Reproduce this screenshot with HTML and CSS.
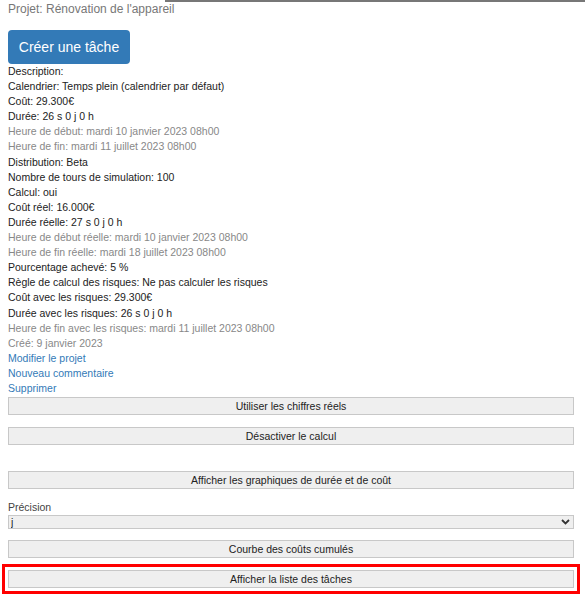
FILE: index.html
```html
<!DOCTYPE html>
<html lang="fr">
<head>
  <meta charset="UTF-8">
  <title>Projet</title>
  <link rel="stylesheet" href="styles.css">
</head>
<body>
  <div class="topbar">
    <div class="project-title">Projet: Rénovation de l'appareil</div>
    <div class="top-line"></div>
  </div>
  <div class="page">
    <a href="#" class="btn-primary">Créer une tâche</a>
    <div class="details">
      <div>Description:</div>
      <div>Calendrier: Temps plein (calendrier par défaut)</div>
      <div>Coût: 29.300€</div>
      <div>Durée: 26 s 0 j 0 h</div>
      <div class="muted">Heure de début: mardi 10 janvier 2023 08h00</div>
      <div class="muted">Heure de fin: mardi 11 juillet 2023 08h00</div>
      <div>Distribution: Beta</div>
      <div>Nombre de tours de simulation: 100</div>
      <div>Calcul: oui</div>
      <div>Coût réel: 16.000€</div>
      <div>Durée réelle: 27 s 0 j 0 h</div>
      <div class="muted">Heure de début réelle: mardi 10 janvier 2023 08h00</div>
      <div class="muted">Heure de fin réelle: mardi 18 juillet 2023 08h00</div>
      <div>Pourcentage achevé: 5 %</div>
      <div>Règle de calcul des risques: Ne pas calculer les risques</div>
      <div>Coût avec les risques: 29.300€</div>
      <div>Durée avec les risques: 26 s 0 j 0 h</div>
      <div class="muted">Heure de fin avec les risques: mardi 11 juillet 2023 08h00</div>
      <div class="muted">Créé: 9 janvier 2023</div>
      <a href="#">Modifier le projet</a>
      <a href="#">Nouveau commentaire</a>
      <a href="#">Supprimer</a>
    </div>
    <div class="actions">
      <button class="btn">Utiliser les chiffres réels</button>
      <button class="btn">Désactiver le calcul</button>
      <button class="btn btn-spaced">Afficher les graphiques de durée et de coût</button>
      <label class="field-label">Précision</label>
      <div class="select-wrap">
        <select class="select">
          <option>j</option>
        </select>
        <svg class="chevron" width="9" height="6" viewBox="0 0 9 6"><path d="M1 1 L4.5 4.5 L8 1" fill="none" stroke="#333" stroke-width="1.8"/></svg>
      </div>
      <button class="btn">Courbe des coûts cumulés</button>
      <div class="highlight">
        <button class="btn">Afficher la liste des tâches</button>
      </div>
    </div>
  </div>
</body>
</html>
```

FILE: styles.css
```css
* { box-sizing: border-box; }
body {
  margin: 0;
  font-family: 'Liberation Sans', Arial, sans-serif;
  font-size: 10.5px;
  color: #222;
  background: #fff;
}
.topbar {
  position: relative;
  height: 22px;
}
.project-title {
  padding: 2px 8px 0;
  font-size: 12px;
  color: #777;
}
.top-line {
  position: absolute;
  top: 0;
  left: 165px;
  right: 0;
  height: 2px;
  background: #777;
}
.page {
  padding: 8px 11px 0 8px;
}
.btn-primary {
  display: inline-block;
  width: 122px;
  height: 34px;
  line-height: 34px;
  text-align: center;
  background: #337ab7;
  color: #fff;
  font-size: 14px;
  border-radius: 4px;
  text-decoration: none;
}
.details > div,
.details > a {
  display: block;
  line-height: 15.1px;
}
.details a {
  color: #337ab7;
  text-decoration: none;
}
.muted {
  color: #888;
}
.actions {
  display: flex;
  flex-direction: column;
  padding-top: 1px;
}
.btn {
  display: block;
  width: 100%;
  height: 18px;
  padding: 0;
  margin: 0 0 12px;
  font-family: inherit;
  font-size: 10.5px;
  color: #222;
  background: #efefef;
  border: 1px solid #c8c8c8;
}
.btn-spaced {
  margin-top: 14px;
}
.field-label {
  margin-top: -1px;
  line-height: 15px;
  color: #444;
}
.select-wrap {
  position: relative;
  margin-bottom: 11px;
}
.select {
  display: block;
  width: 100%;
  height: 14px;
  padding: 0 0 0 2px;
  font-family: inherit;
  font-size: 10.5px;
  line-height: 12px;
  color: #222;
  background: #efefef;
  border: 1px solid #c8c8c8;
  appearance: none;
  -webkit-appearance: none;
}
.chevron {
  position: absolute;
  right: 4px;
  top: 4px;
}
.highlight {
  margin: -6px -6px 0 -6px;
  padding: 3px;
  border: 3px solid #f00;
}
.highlight .btn {
  margin: 0;
}
```
